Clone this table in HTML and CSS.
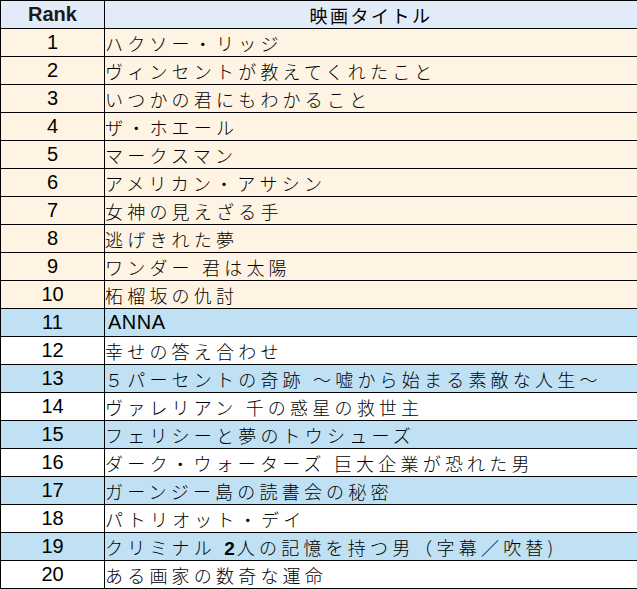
FILE: index.html
```html
<!DOCTYPE html>
<html lang="ja">
<head>
<meta charset="utf-8">
<title>映画ランキング</title>
<link rel="stylesheet" href="styles.css">
</head>
<body>
<table class="rank-table">
  <colgroup><col class="c-rank"><col class="c-title"></colgroup>
  <thead>
    <tr class="head"><th class="rank">Rank</th><th class="title-h">映画タイトル</th></tr>
  </thead>
  <tbody>
    <tr class="cream"><td class="rank">1</td><td class="title">ハクソー・リッジ</td></tr>
    <tr class="cream"><td class="rank">2</td><td class="title">ヴィンセントが教えてくれたこと</td></tr>
    <tr class="cream"><td class="rank">3</td><td class="title">いつかの君にもわかること</td></tr>
    <tr class="cream"><td class="rank">4</td><td class="title">ザ・ホエール</td></tr>
    <tr class="cream"><td class="rank">5</td><td class="title">マークスマン</td></tr>
    <tr class="cream"><td class="rank">6</td><td class="title">アメリカン・アサシン</td></tr>
    <tr class="cream"><td class="rank">7</td><td class="title">女神の見えざる手</td></tr>
    <tr class="cream"><td class="rank">8</td><td class="title">逃げきれた夢</td></tr>
    <tr class="cream"><td class="rank">9</td><td class="title">ワンダー 君は太陽</td></tr>
    <tr class="cream"><td class="rank">10</td><td class="title">柘榴坂の仇討</td></tr>
    <tr class="blue"><td class="rank">11</td><td class="title latin">ANNA</td></tr>
    <tr class="white"><td class="rank">12</td><td class="title">幸せの答え合わせ</td></tr>
    <tr class="blue"><td class="rank">13</td><td class="title">５パーセントの奇跡 ～嘘から始まる素敵な人生～</td></tr>
    <tr class="white"><td class="rank">14</td><td class="title">ヴァレリアン 千の惑星の救世主</td></tr>
    <tr class="blue"><td class="rank">15</td><td class="title">フェリシーと夢のトウシューズ</td></tr>
    <tr class="white"><td class="rank">16</td><td class="title">ダーク・ウォーターズ 巨大企業が恐れた男</td></tr>
    <tr class="blue"><td class="rank">17</td><td class="title">ガーンジー島の読書会の秘密</td></tr>
    <tr class="white"><td class="rank">18</td><td class="title">パトリオット・デイ</td></tr>
    <tr class="blue"><td class="rank">19</td><td class="title">クリミナル <span class="num">2</span>人の記憶を持つ男（字幕／吹替)</td></tr>
    <tr class="white"><td class="rank">20</td><td class="title">ある画家の数奇な運命</td></tr>
  </tbody>
</table>
</body>
</html>
```
FILE: styles.css
```css
html, body {
  margin: 0;
  padding: 0;
  background: #ffffff;
}

.rank-table {
  border-collapse: collapse;
  table-layout: fixed;
  width: 637px;
}

.c-rank { width: 104px; }
.c-title { width: 533px; }

.rank-table th,
.rank-table td {
  border: 1px solid #000;
  height: 27px;
  padding: 0;
  box-sizing: content-box;
  vertical-align: middle;
  white-space: nowrap;
  overflow: hidden;
  color: #000;
}

.rank {
  text-align: center;
  font-family: "Liberation Sans", Arial, sans-serif;
  font-size: 20px;
  font-weight: normal;
}

th.rank {
  font-weight: bold;
  color: #1a1a1a;
}

.title,
.title-h {
  font-family: "Noto Sans CJK JP", "Noto Sans CJK SC", sans-serif;
  font-weight: 300;
  font-size: 18px;
  letter-spacing: 4.2px;
}

.title {
  text-align: left;
  padding-left: 7px;
}

.title-h {
  text-align: center;
  font-weight: 400;
  letter-spacing: 2.5px;
}

.title.latin {
  font-family: "Liberation Sans", Arial, sans-serif;
  font-weight: normal;
  font-size: 20px;
  letter-spacing: 0.5px;
  padding-left: 3px;
}

.num {
  font-family: "Liberation Sans", Arial, sans-serif;
  font-weight: bold;
  font-size: 19px;
  letter-spacing: 2px;
}

.head { background: #e2ecf8; }
.cream { background: #fff4e3; }
.blue { background: #bfe1f3; }
.white { background: #ffffff; }
```
